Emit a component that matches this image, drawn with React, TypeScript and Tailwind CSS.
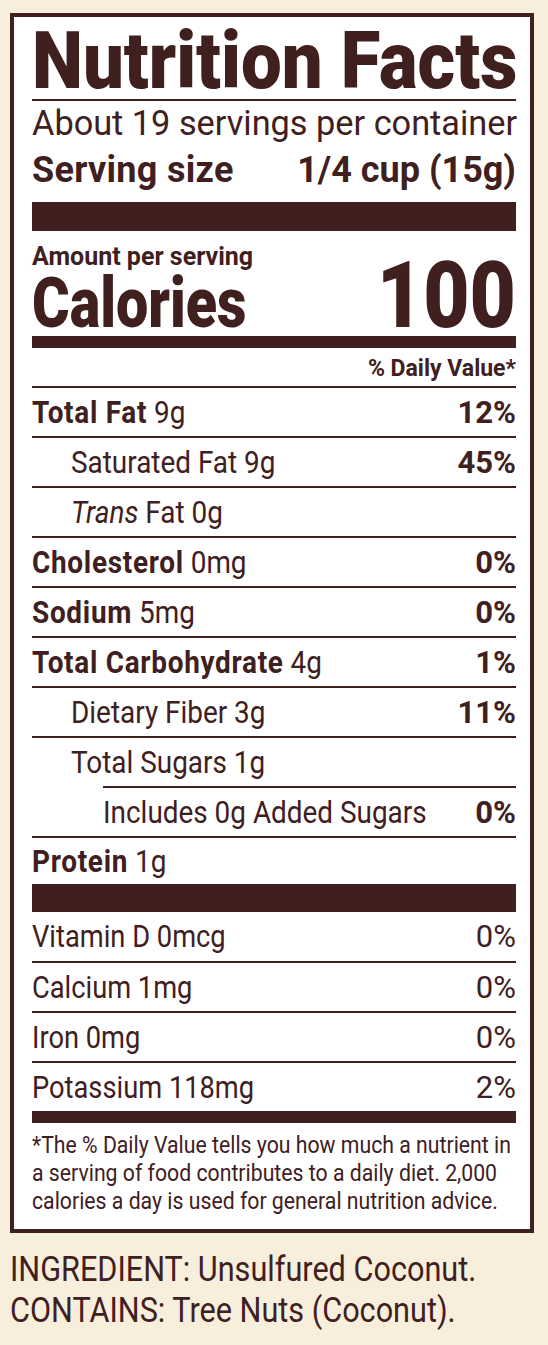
import { ReactNode } from 'react'

type Nutrient = {
    label: ReactNode
    dv?: string
    indent?: 0 | 1 | 2
    lineIndent?: boolean
}

const B = ({ children }: { children: ReactNode }) => <b className="tracking-[0.8px]">{children}</b>

const nutrients: Nutrient[] = [
    { label: <><B>Total Fat</B> 9g</>, dv: '12%' },
    { label: 'Saturated Fat 9g', dv: '45%', indent: 1 },
    { label: <><i>Trans</i> Fat 0g</>, indent: 1 },
    { label: <><B>Cholesterol</B> 0mg</>, dv: '0%' },
    { label: <><B>Sodium</B> 5mg</>, dv: '0%' },
    { label: <><B>Total Carbohydrate</B> 4g</>, dv: '1%' },
    { label: 'Dietary Fiber 3g', dv: '11%', indent: 1 },
    { label: 'Total Sugars 1g', indent: 1 },
    { label: 'Includes 0g Added Sugars', dv: '0%', indent: 2, lineIndent: true },
]

const vitamins = [
    ['Vitamin D 0mcg', '0%'],
    ['Calcium 1mg', '0%'],
    ['Iron 0mg', '0%'],
    ['Potassium 118mg', '2%'],
]

// condensed look: Roboto squeezed horizontally
const Narrow = ({ children, className = '' }: { children: ReactNode; className?: string }) => (
    <span className={`inline-block whitespace-nowrap ${className}`}>{children}</span>
)

const NutrientRow = ({ n }: { n: Nutrient }) => {
    const pad = n.indent === 2 ? 'pl-[71px]' : n.indent === 1 ? 'pl-[39px]' : 'pl-0'
    return (
        <div>
            <div className={n.lineIndent ? 'h-[2px] ml-[71px] bg-[#40201f]' : 'h-[2px] bg-[#40201f]'} />
            <div className={`h-[48px] flex items-center justify-between text-[31px] leading-none ${pad}`}>
                <Narrow className="origin-left scale-x-[0.9]">{n.label}</Narrow>
                {n.dv && <b>{n.dv}</b>}
            </div>
        </div>
    )
}

export default function App() {
    return (
        <div className="min-h-screen w-full bg-[#f7efdb] pt-[13px] pl-[10px] text-[#40201f] font-['Roboto',sans-serif]">
            <div className="w-[524px] border-4 border-[#40201f] bg-white pl-[18px] pr-[14px]">
                <div className="h-[82px] pt-[6px] flex items-center">
                    <Narrow className="origin-left scale-x-[0.906] text-[80px] font-black leading-[76px]">
                        Nutrition Facts
                    </Narrow>
                </div>
                <div className="h-[2px] bg-[#40201f]" />
                <div className="h-[44px] flex items-center text-[35px] leading-none">
                    <Narrow className="origin-left scale-x-[0.98]">About 19 servings per container</Narrow>
                </div>
                <div className="h-[50px] flex items-center justify-between text-[36px] font-bold leading-none">
                    <span className="tracking-[0.3px]">Serving size</span>
                    <span>1/4 cup (15g)</span>
                </div>
                <div className="mt-[7px] h-[29px] bg-[#40201f]" />

                <div className="h-[105px] flex items-end justify-between">
                    <div className="flex flex-col">
                        <span className="text-[25px] font-bold leading-none mb-[4px]">Amount per serving</span>
                        <Narrow className="origin-left scale-x-[0.82] text-[70px] font-black leading-[60px] mb-[3px]">
                            Calories
                        </Narrow>
                    </div>
                    <Narrow className="origin-right scale-x-[0.87] text-[92px] font-black leading-[80px]">100</Narrow>
                </div>
                <div className="h-[12px] bg-[#40201f]" />
                <div className="h-[38px] pt-[3px] flex items-center justify-end text-[23px] font-bold leading-none">
                    % Daily Value*
                </div>

                {nutrients.map((n, i) => (
                    <NutrientRow key={i} n={n} />
                ))}
                <div className="h-[2px] bg-[#40201f]" />
                <div className="h-[46px] flex items-center text-[31px] leading-none">
                    <Narrow className="origin-left scale-x-[0.9]">
                        <B>Protein</B> 1g
                    </Narrow>
                </div>
                <div className="h-[28px] bg-[#40201f]" />

                {vitamins.map(([label, dv], i) => (
                    <div key={label}>
                        {i > 0 && <div className="h-[2px] bg-[#40201f]" />}
                        <div className={`${i === 0 ? 'h-[49px]' : 'h-[48px]'} flex items-center justify-between text-[31px] leading-none`}>
                            <Narrow className="origin-left scale-x-[0.88]">{label}</Narrow>
                            <span>{dv}</span>
                        </div>
                    </div>
                ))}
                <div className="h-[12px] bg-[#40201f]" />
                <div className="pt-[8px] pb-[14px] flex flex-col text-[24px] leading-[28px]">
                    <Narrow className="origin-left scale-x-[0.885]">
                        *The % Daily Value tells you how much a nutrient in
                    </Narrow>
                    <Narrow className="origin-left scale-x-[0.885]">
                        a serving of food contributes to a daily diet. 2,000
                    </Narrow>
                    <Narrow className="origin-left scale-x-[0.885]">
                        calories a day is used for general nutrition advice.
                    </Narrow>
                </div>
            </div>
            <div className="pt-[16px] flex flex-col text-[35px] leading-[41px]">
                <Narrow className="origin-left scale-x-[0.875]">INGREDIENT: Unsulfured Coconut.</Narrow>
                <Narrow className="origin-left scale-x-[0.875]">CONTAINS: Tree Nuts (Coconut).</Narrow>
            </div>
        </div>
    )
}
